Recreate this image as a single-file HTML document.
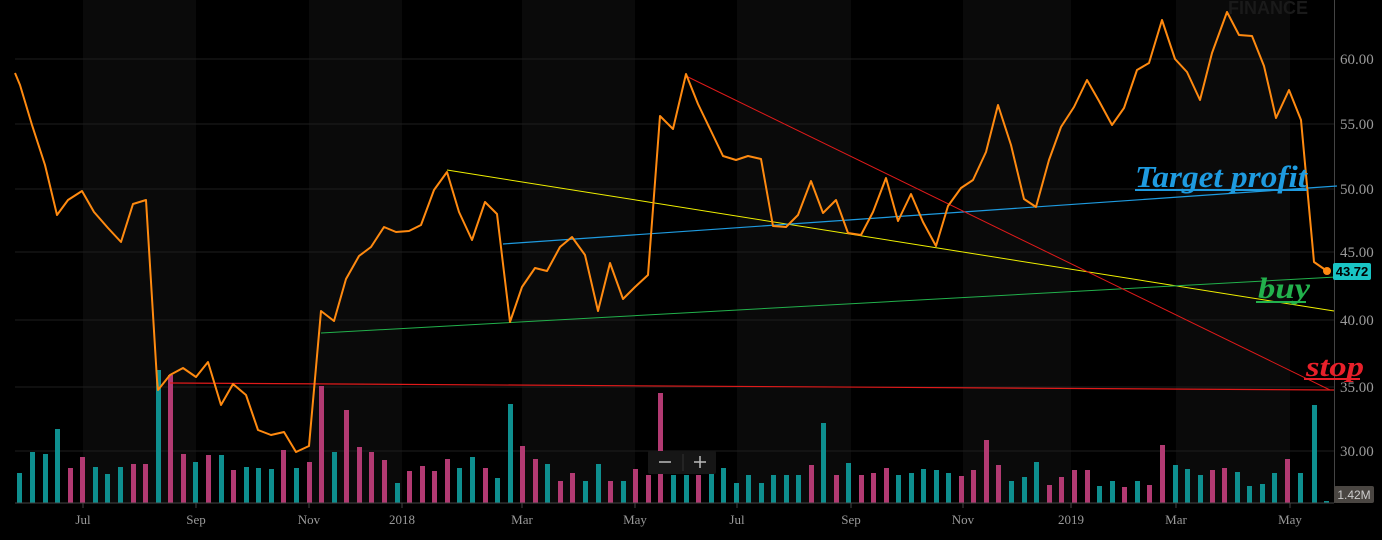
<!DOCTYPE html>
<html><head><meta charset="utf-8"><style>
html,body{margin:0;padding:0;background:#000;width:1382px;height:540px;overflow:hidden}
svg{display:block}
.ax{font-family:"Liberation Serif",serif;font-size:13px;fill:#9a9a9a}
.ay{font-family:"Liberation Serif",serif;font-size:15px;fill:#9a9a9a}
</style></head><body>
<svg width="1382" height="540" viewBox="0 0 1382 540" xmlns="http://www.w3.org/2000/svg">
<rect width="1382" height="540" fill="#000"/>
<g fill="#0a0a0a">
<rect x="83" y="0" width="113" height="503"/><rect x="309" y="0" width="93" height="503"/>
<rect x="522" y="0" width="113" height="503"/><rect x="737" y="0" width="114" height="503"/>
<rect x="963" y="0" width="108" height="503"/><rect x="1176" y="0" width="114" height="503"/>
</g>
<g stroke="#1e1e1e" stroke-width="1">
<line x1="15" y1="59" x2="1334" y2="59"/><line x1="15" y1="124" x2="1334" y2="124"/>
<line x1="15" y1="189" x2="1334" y2="189"/><line x1="15" y1="252" x2="1334" y2="252"/>
<line x1="15" y1="320" x2="1334" y2="320"/><line x1="15" y1="387" x2="1334" y2="387"/>
<line x1="15" y1="451" x2="1334" y2="451"/>
</g>
<text x="1228" y="14" font-family="Liberation Sans,sans-serif" font-size="18" font-weight="bold" fill="#1a1a1a">FINANCE</text>
<g>
<path fill="#0e8f8f" d="M17 473h5v30h-5zM30 452h5v51h-5zM43 454h5v49h-5zM55 429h5v74h-5zM93 467h5v36h-5zM105 474h5v29h-5zM118 467h5v36h-5zM156 370h5v133h-5zM193 462h5v41h-5zM219 455h5v48h-5zM244 467h5v36h-5zM256 468h5v35h-5zM269 469h5v34h-5zM294 468h5v35h-5zM332 452h5v51h-5zM395 483h5v20h-5zM457 468h5v35h-5zM470 457h5v46h-5zM495 478h5v25h-5zM508 404h5v99h-5zM545 464h5v39h-5zM583 481h5v22h-5zM596 464h5v39h-5zM621 481h5v22h-5zM671 475h5v28h-5zM684 475h5v28h-5zM709 470h5v33h-5zM721 468h5v35h-5zM734 483h5v20h-5zM746 475h5v28h-5zM759 483h5v20h-5zM771 475h5v28h-5zM784 475h5v28h-5zM796 475h5v28h-5zM821 423h5v80h-5zM846 463h5v40h-5zM896 475h5v28h-5zM909 473h5v30h-5zM921 469h5v34h-5zM934 470h5v33h-5zM946 473h5v30h-5zM1009 481h5v22h-5zM1022 477h5v26h-5zM1034 462h5v41h-5zM1097 486h5v17h-5zM1110 481h5v22h-5zM1135 481h5v22h-5zM1173 465h5v38h-5zM1185 469h5v34h-5zM1198 475h5v28h-5zM1235 472h5v31h-5zM1247 486h5v17h-5zM1260 484h5v19h-5zM1272 473h5v30h-5zM1298 473h5v30h-5zM1312 405h5v98h-5zM1324 501h5v2h-5z"/>
<path fill="#b23a72" d="M68 468h5v35h-5zM80 457h5v46h-5zM131 464h5v39h-5zM143 464h5v39h-5zM168 375h5v128h-5zM181 454h5v49h-5zM206 455h5v48h-5zM231 470h5v33h-5zM281 450h5v53h-5zM307 462h5v41h-5zM319 386h5v117h-5zM344 410h5v93h-5zM357 447h5v56h-5zM369 452h5v51h-5zM382 460h5v43h-5zM407 471h5v32h-5zM420 466h5v37h-5zM432 471h5v32h-5zM445 459h5v44h-5zM483 468h5v35h-5zM520 446h5v57h-5zM533 459h5v44h-5zM558 481h5v22h-5zM570 473h5v30h-5zM608 481h5v22h-5zM633 469h5v34h-5zM646 475h5v28h-5zM658 393h5v110h-5zM696 475h5v28h-5zM809 465h5v38h-5zM834 475h5v28h-5zM859 475h5v28h-5zM871 473h5v30h-5zM884 468h5v35h-5zM959 476h5v27h-5zM971 470h5v33h-5zM984 440h5v63h-5zM996 465h5v38h-5zM1047 485h5v18h-5zM1059 477h5v26h-5zM1072 470h5v33h-5zM1085 470h5v33h-5zM1122 487h5v16h-5zM1147 485h5v18h-5zM1160 445h5v58h-5zM1210 470h5v33h-5zM1222 468h5v35h-5zM1285 459h5v44h-5z"/>
</g>
<line x1="15" y1="503" x2="1334" y2="503" stroke="#444" stroke-width="1"/>
<line x1="1334.5" y1="0" x2="1334.5" y2="503" stroke="#444" stroke-width="1"/>
<g stroke="#444"><line x1="83" y1="503" x2="83" y2="508"/><line x1="196" y1="503" x2="196" y2="508"/><line x1="309" y1="503" x2="309" y2="508"/><line x1="402" y1="503" x2="402" y2="508"/><line x1="522" y1="503" x2="522" y2="508"/><line x1="635" y1="503" x2="635" y2="508"/><line x1="737" y1="503" x2="737" y2="508"/><line x1="851" y1="503" x2="851" y2="508"/><line x1="963" y1="503" x2="963" y2="508"/><line x1="1071" y1="503" x2="1071" y2="508"/><line x1="1176" y1="503" x2="1176" y2="508"/><line x1="1290" y1="503" x2="1290" y2="508"/></g>
<g class="ax" text-anchor="middle">
<text x="83" y="524">Jul</text><text x="196" y="524">Sep</text><text x="309" y="524">Nov</text><text x="402" y="524">2018</text><text x="522" y="524">Mar</text><text x="635" y="524">May</text><text x="737" y="524">Jul</text><text x="851" y="524">Sep</text><text x="963" y="524">Nov</text><text x="1071" y="524">2019</text><text x="1176" y="524">Mar</text><text x="1290" y="524">May</text>
</g>
<g class="ay">
<text x="1340" y="64">60.00</text><text x="1340" y="129">55.00</text><text x="1340" y="194">50.00</text><text x="1340" y="257">45.00</text><text x="1340" y="325">40.00</text><text x="1340" y="392">35.00</text><text x="1340" y="456">30.00</text>
</g>
<line x1="447" y1="170" x2="1334" y2="311" stroke="#f0f000" stroke-width="1"/>
<line x1="503" y1="244" x2="1337" y2="186" stroke="#1e9be0" stroke-width="1.2"/>
<line x1="321" y1="333" x2="1336" y2="277" stroke="#22b14c" stroke-width="1"/>
<line x1="686" y1="76" x2="1330" y2="390" stroke="#e01a1a" stroke-width="1"/>
<line x1="170" y1="383" x2="1334" y2="390" stroke="#e01a1a" stroke-width="1.2"/>
<polyline fill="none" stroke="#ff8a10" stroke-width="2" stroke-linejoin="round" points="15,73 20,85 32,125 45,165 57,215 68,200 82,191 94,212 108,228 121,242 133,204 146,200 157,380 158,390 170,375 183,368 196,377 208,362 221,405 233,384 246,395 258,430 271,435 284,432 296,452 309,446 321,311 334,321 346,279 359,256 371,247 384,227 396,232 409,231 421,225 434,190 447,172 459,212 472,240 485,202 497,214 510,322 522,287 535,268 547,271 560,247 572,237 585,255 598,311 610,263 623,299 635,287 648,275 660,116 673,129 686,74 698,104 711,131 723,156 736,160 748,156 761,159 773,226 786,227 798,215 811,181 823,213 836,200 848,233 861,235 873,212 886,178 898,221 911,194 923,222 936,246 948,206 961,188 973,180 986,152 998,105 1011,145 1024,199 1036,207 1049,160 1061,127 1074,107 1087,80 1099,101 1112,125 1124,108 1137,70 1149,63 1162,20 1175,59 1187,72 1200,100 1212,53 1227,12 1239,35 1252,36 1264,66 1276,118 1289,90 1301,120 1314,262 1327,271"/>
<circle cx="1327" cy="271" r="4" fill="#ff8a10"/>
<rect x="1333" y="263" width="38" height="17" rx="2" fill="#19c4c4"/>
<text x="1352" y="276" text-anchor="middle" font-family="Liberation Sans,sans-serif" font-size="13" font-weight="bold" fill="#000">43.72</text>
<rect x="1334" y="486" width="40" height="17" rx="2" fill="#4a4642"/>
<text x="1354" y="499" text-anchor="middle" font-family="Liberation Sans,sans-serif" font-size="12" fill="#ccc">1.42M</text>
<g font-family="Liberation Serif,serif" font-style="italic" font-weight="bold">
<text x="1135" y="187" font-size="31" fill="#1e9be0" textLength="172" lengthAdjust="spacingAndGlyphs">Target profit</text>
<line x1="1135" y1="190" x2="1307" y2="190" stroke="#1e9be0" stroke-width="2"/>
<text x="1258" y="298" font-size="30" fill="#22b14c" textLength="52" lengthAdjust="spacingAndGlyphs">buy</text>
<line x1="1256" y1="302" x2="1306" y2="302" stroke="#22b14c" stroke-width="2"/>
<text x="1306" y="376" font-size="28" fill="#e8202a" textLength="58" lengthAdjust="spacingAndGlyphs">stop</text>
<line x1="1304" y1="379" x2="1360" y2="379" stroke="#e8202a" stroke-width="2"/>
</g>
<rect x="648" y="451" width="68" height="23" rx="2" fill="#161616"/>
<line x1="659" y1="462" x2="671" y2="462" stroke="#bbb" stroke-width="1.5"/>
<line x1="683" y1="454" x2="683" y2="471" stroke="#333"/>
<line x1="694" y1="462" x2="706" y2="462" stroke="#bbb" stroke-width="1.5"/>
<line x1="700" y1="456" x2="700" y2="468" stroke="#bbb" stroke-width="1.5"/>
</svg>
</body></html>
